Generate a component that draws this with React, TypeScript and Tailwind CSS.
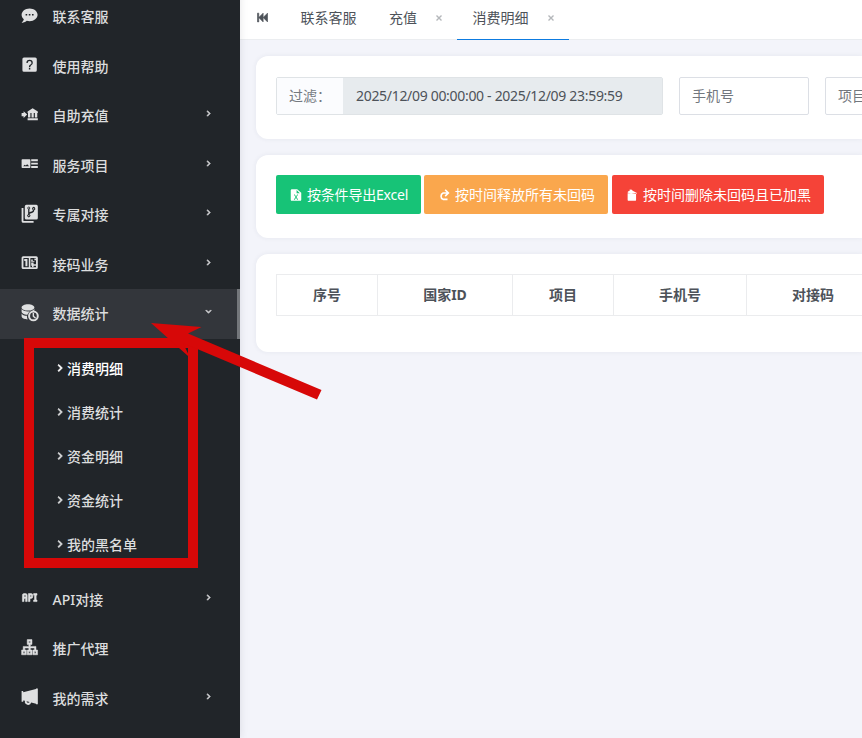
import type { ReactNode } from "react";

function Icon({ children, className = "" }: { children: ReactNode; className?: string }) {
  return (
    <svg viewBox="0 0 24 24" fill="currentColor" fillRule="evenodd" className={`shrink-0 ${className}`}>
      {children}
    </svg>
  );
}

const icons: Record<string, ReactNode> = {
  chat: (
    <path d="M12 3C17.5 3 22 6.58 22 11S17.5 19 12 19C10.76 19 9.57 18.82 8.47 18.5C5.55 21 2 21 2 21C4.33 18.67 4.7 17.1 4.75 16.5C3.05 15.07 2 13.13 2 11C2 6.58 6.5 3 12 3M17 12V10H15V12H17M13 12V10H11V12H13M9 12V10H7V12H9Z" />
  ),
  help: (
    <path d="M11.1,18H12.9V16H11.1V18M12,6A4,4 0 0,0 8,10H9.6A2.4,2.4 0 0,1 12,7.6A2.4,2.4 0 0,1 14.4,10C14.4,12 11.2,11.75 11.2,15H12.8C12.8,12.75 16,12.5 16,10A4,4 0 0,0 12,6M5,3H19A2,2 0 0,1 21,5V19A2,2 0 0,1 19,21H5A2,2 0 0,1 3,19V5A2,2 0 0,1 5,3Z" />
  ),
  bank: (
    <path d="M15.8 4L22.3 8V10H9.5V8ZM10 10H13V15.5H10ZM14.4 10H17.2V15.5H14.4ZM18.6 10H21.6V15.5H18.6ZM9.5 16.5H22.3V19H9.5ZM2 10H4.5V7.8L9 12L4.5 16.2V14H2Z" />
  ),
  service: (
    <path d="M3 6.5H12A1 1 0 0 1 13 7.5V16.5A1 1 0 0 1 12 17.5H3A1 1 0 0 1 2 16.5V7.5A1 1 0 0 1 3 6.5M4 15.3H11.5L9 12.8L7.2 14.4L5.8 13.5ZM14 6.5H22.3V9H14ZM14 10.8H22.3V13.2H14ZM14 15H22.3V17.5H14Z" />
  ),
  repos: (
    <path d="M8 1H20.5A2 2 0 0 1 22.3 3V17.5A2 2 0 0 1 20.5 19.5H8A2 2 0 0 1 6 17.5V3A2 2 0 0 1 8 1M2 5H4.3V21.3H17V23.5H4A2 2 0 0 1 2 21.5ZM11 3A2 2 0 0 0 10.2 6.7V12.7A2 2 0 1 0 11.8 12.7C12.3 11 18 11.5 17.8 7.7A2 2 0 1 0 16.2 7.6C16 9.8 13.5 9.5 11.8 10.3V6.7A2 2 0 0 0 11 3M11 4.2A.8 .8 0 1 1 11 5.8A.8 .8 0 0 1 11 4.2M17 5.2A.8 .8 0 1 1 17 6.8A.8 .8 0 0 1 17 5.2M11 13.7A.8 .8 0 1 1 11 15.3A.8 .8 0 0 1 11 13.7Z" />
  ),
  counter: (
    <path d="M4 4H20.3A2 2 0 0 1 22.3 6V18A2 2 0 0 1 20.3 20H4A2 2 0 0 1 2 18V6A2 2 0 0 1 4 4M4.3 6.3V17.7H11V6.3ZM13 6.3V17.7H20V6.3ZM5.3 7.5H9.3V16.5H6.8V10H5.3ZM14 8H16V10H18V7H20V9H18V11H14ZM14 12H17V14H20V16H17V18H15V16H14Z" />
  ),
  database: (
    <path d="M10 1.5C5.6 1.5 2 3.2 2 5.5S5.6 9.4 10 9.4S18 7.8 18 5.5S14.4 1.5 10 1.5M2 7.5V11C2 12.8 5.2 14.6 9.3 14.8A8 8 0 0 1 18 9.5V7.5C17 9.6 13.5 10.6 10 10.6S3 9.6 2 7.5M2 13V16.5C2 18.6 5.3 20.4 9.5 20.5A8 8 0 0 1 8.7 16C5.5 15.9 2.8 15 2 13M16.8 9.5A6.7 6.7 0 1 0 16.8 22.9A6.7 6.7 0 0 0 16.8 9.5M16.8 12A4.2 4.2 0 1 1 16.8 20.4A4.2 4.2 0 0 1 16.8 12M15.8 12.5V17L19 19.6L20 18L17.6 16.2V12.5Z" />
  ),
  api: (
    <path
      stroke="currentColor"
      strokeWidth=".7"
      d="M7 7H5A2 2 0 0 0 3 9V17H5V13H7V17H9V9A2 2 0 0 0 7 7M7 11H5V9H7M14 7H10.5V17H12.5V13H14A2 2 0 0 0 16 11V9A2 2 0 0 0 14 7M14 11H12.5V9H14M20.2 9V15H21.3V17H17V15H18.2V9H17V7H21.3V9Z"
    />
  ),
  sitemap: (
    <path
      stroke="currentColor"
      strokeWidth=".6"
      d="M9 2H15V8H13V10.5H20V15H22V21H16V15H18V12.5H13V15H15V21H9V15H11V12.5H6V15H8V21H2V15H4V10.5H11V8H9ZM11 4V6H13V4ZM4 17V19H6V17ZM11 17V19H13V17ZM18 17V19H20V17Z"
    />
  ),
  bullhorn: (
    <path d="M2 5H4V6.5L20 2.5V2H22.3V21.5H20V21L14 19.3A4 4 0 0 1 6.2 17.3L4 16.8V18.5H2ZM8.2 17.8A2.1 2.1 0 0 0 12 18.8Z" />
  ),
};

const chevron = <path d="M8.59 16.58L13.17 12L8.59 7.41L10 6L16 12L10 18L8.59 16.58Z" />;

function MenuItem({ icon, label, arrow, active }: { icon: string; label: string; arrow?: boolean; active?: boolean }) {
  return (
    <div
      className={`flex h-[49.5px] shrink-0 items-center pl-5 ${
        active ? "border-r-[3px] border-[#74777b] bg-[#33363b] pr-[23px]" : "pr-[26px]"
      }`}
    >
      <Icon className="mt-[-3.5px] mr-[13.5px] ml-[0.3px] h-[19.2px] w-[19.2px] text-[#dfe0e1]">{icons[icon]}</Icon>
      <span className="-ml-[0.5px] flex-1">{label}</span>
      {arrow && (
        <Icon className={`mt-[-5px] h-[11px] w-[11px] text-[#d0d1d3] ${active ? "rotate-90" : ""}`}>
          <g stroke="currentColor" strokeWidth="1.5">{chevron}</g>
        </Icon>
      )}
    </div>
  );
}

const subItems = ["消费明细", "消费统计", "资金明细", "资金统计", "我的黑名单"];

function Sidebar() {
  return (
    <aside className="z-10 -mt-[7.6px] flex h-[746px] w-60 shrink-0 flex-col overflow-hidden bg-[#212529] font-medium text-[#dcddde] shadow-[0_0_8px_rgba(40,45,60,0.12)]">
      <MenuItem icon="chat" label="联系客服" />
      <MenuItem icon="help" label="使用帮助" />
      <MenuItem icon="bank" label="自助充值" arrow />
      <MenuItem icon="service" label="服务项目" arrow />
      <MenuItem icon="repos" label="专属对接" arrow />
      <MenuItem icon="counter" label="接码业务" arrow />
      <MenuItem icon="database" label="数据统计" arrow active />
      <div className="shrink-0 py-2">
        {subItems.map((label, i) => (
          <div key={label} className={`flex h-11 items-center pl-[53px] ${i === 0 ? "text-white" : ""}`}>
            <Icon className="-mt-px h-3.5 w-3.5">
              <g stroke="currentColor" strokeWidth="1.5">{chevron}</g>
            </Icon>
            <span>{label}</span>
          </div>
        ))}
      </div>
      <MenuItem icon="api" label="API对接" arrow />
      <MenuItem icon="sitemap" label="推广代理" />
      <MenuItem icon="bullhorn" label="我的需求" arrow />
    </aside>
  );
}

function Close() {
  return (
    <svg viewBox="0 0 6 6" className="h-[6px] w-[6px] stroke-[#b4b7ba]" strokeWidth="1.4">
      <path d="M.5 .5L5.5 5.5M5.5 .5L.5 5.5" />
    </svg>
  );
}

function Tabs() {
  return (
    <header className="flex h-10 border-b border-[#ebedf0] bg-white text-[#4d5259]">
      <div className="flex w-[45px] items-center justify-center pb-1">
        <Icon className="h-[15px] w-[15px]">
          <path stroke="currentColor" strokeWidth="1" d="M20,5V19L13,12ZM6,5V19H4V5ZM13,5V19L6,12Z" />
        </Icon>
      </div>
      <div className="flex h-10 w-[88px] items-center pb-1 pl-[15.5px]">联系客服</div>
      <div className="flex h-10 w-[84px] items-center gap-[19px] pb-1 pl-4">
        充值
        <Close />
      </div>
      <div className="flex h-10 w-[112px] items-center gap-[19px] border-b border-[#0d7be0] pb-[3px] pl-[15.5px]">
        消费明细
        <Close />
      </div>
    </header>
  );
}

function Card({ children, className }: { children: ReactNode; className: string }) {
  return (
    <section className={`overflow-hidden rounded-l-xl bg-white pl-5 shadow-[0_0_5px_rgba(40,50,80,0.07)] ${className}`}>
      {children}
    </section>
  );
}

function Filters() {
  return (
    <Card className="flex h-[83px] pt-[21px]">
      <div className="flex h-[38px] w-[387px] shrink-0 rounded-[2px] border border-[#dfe3e6]">
        <div className="flex w-[66px] shrink-0 items-center bg-[#fbfcfe] pl-3 text-[#74797f]">过滤：</div>
        <div className="flex flex-1 items-center whitespace-nowrap bg-[#e7ebee] pl-[13px] tracking-[-0.31px] text-[#4d5259]">
          2025/12/09 00:00:00 - 2025/12/09 23:59:59
        </div>
      </div>
      <div className="ml-4 flex h-[38px] w-[130px] shrink-0 items-center rounded-[2px] border border-[#dcdfe5] pl-3 text-[#72777e]">
        手机号
      </div>
      <div className="ml-4 flex h-[38px] w-[130px] shrink-0 items-center rounded-[2px] border border-[#dcdfe5] pl-3 text-[#72777e]">
        项目
      </div>
    </Card>
  );
}

function Actions() {
  const base = "flex h-[39px] shrink-0 items-center whitespace-nowrap rounded-[2px] pl-[13px] text-white";
  const icon = "mr-[4px] h-3.5 w-3.5";
  return (
    <Card className="flex h-[83px] pt-5">
      <div className={`${base} w-[145px] bg-[#17c377]`}>
        <Icon className={icon}>
          <path d="M14,2H5A2,2 0 0,0 3,4V20A2,2 0 0,0 5,22H19A2,2 0 0,0 21,20V8L14,2M15.8,20H14L12,16.6L10,20H8.2L11.1,15.5L8.2,11H10L12,14.4L14,11H15.8L12.9,15.5L15.8,20M13,9V3.5L18.5,9H13Z" />
        </Icon>
        <span className="tracking-[-0.2px]">按条件导出Excel</span>
      </div>
      <div className={`${base} ml-[3px] w-[184px] bg-[#faa74d]`}>
        <Icon className={icon}>
          <path
            d="M18 19.5H10.5A6 6 0 0 1 10.5 8.5H18M14 3L19.5 8.5L14 14"
            fill="none"
            stroke="currentColor"
            strokeWidth="2.8"
          />
        </Icon>
        按时间释放所有未回码
      </div>
      <div className={`${base} ml-1 w-[212px] bg-[#f54338]`}>
        <Icon className={icon}>
          <path d="M4.5 9H19V20A2 2 0 0 1 17 22H6.5A2 2 0 0 1 4.5 20ZM4.5 8L5 6L8 4.5L8 2.5L12 3L13 4.5L20.5 8.5L19.3 10.2Z" />
        </Icon>
        按时间删除未回码且已加黑
      </div>
    </Card>
  );
}

const columns = [
  { label: "序号", width: "w-[101px]" },
  { label: "国家ID", width: "w-[135px]" },
  { label: "项目", width: "w-[101px]" },
  { label: "手机号", width: "w-[133px]" },
  { label: "对接码", width: "w-[133px]" },
];

function Records() {
  return (
    <Card className="h-[98px] pt-5">
      <div className="flex h-[42px] w-[700px] border-y border-l border-[#ebecee] font-bold text-[#4d5259]">
        {columns.map((c) => (
          <div key={c.label} className={`flex shrink-0 items-center justify-center border-r border-[#ebecee] ${c.width}`}>
            {c.label}
          </div>
        ))}
      </div>
    </Card>
  );
}

function Annotation() {
  return (
    <svg className="pointer-events-none absolute inset-0 z-20 h-[738px] w-[862px]" viewBox="0 0 862 738">
      <rect x="29" y="343" width="164" height="220" fill="none" stroke="#d70808" strokeWidth="10" />
      <path d="M151 323L201.5 327L188 333.5L321.5 390L317 399.5L183 343L190 357.7Z" fill="#d70808" />
    </svg>
  );
}

export default function App() {
  return (
    <div className="relative flex h-[738px] w-[862px] overflow-hidden bg-[#f3f4fa] font-['Noto_Sans','Noto_Sans_CJK_SC',sans-serif] text-[14px] leading-5">
      <Sidebar />
      <main className="min-w-0 flex-1">
        <Tabs />
        <div className="flex flex-col gap-4 pt-4 pl-4">
          <Filters />
          <Actions />
          <Records />
        </div>
      </main>
      <Annotation />
    </div>
  );
}
